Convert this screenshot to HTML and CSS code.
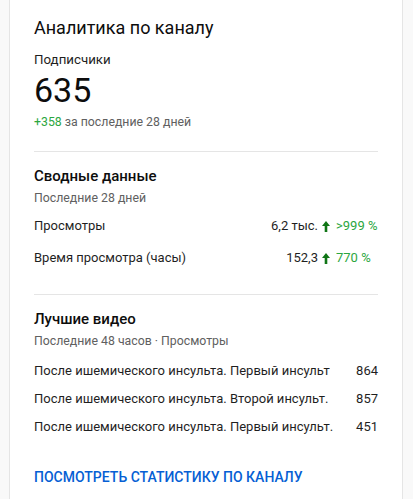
FILE: index.html
```html
<!DOCTYPE html>
<html lang="ru">
<head>
<meta charset="utf-8">
<link rel="stylesheet" href="styles.css">
</head>
<body>
<div class="card">
  <h2 class="card-title">Аналитика по каналу</h2>
  <div class="subs-label">Подписчики</div>
  <div class="subs-count">635</div>
  <div class="subs-delta"><span class="pos">+358</span> за последние 28 дней</div>

  <hr class="divider">

  <h3 class="section-title">Сводные данные</h3>
  <div class="section-sub">Последние 28 дней</div>
  <div class="metrics">
    <div class="metric-row">
      <span class="metric-name">Просмотры</span>
      <span class="metric-value">6,2 тыс.</span>
      <svg class="arrow" viewBox="0 0 8 11" width="8" height="11"><path d="M4 0L8 5H5.3V11H2.7V5H0Z" fill="#107516"/></svg>
      <span class="metric-pct">&gt;999 %</span>
    </div>
    <div class="metric-row">
      <span class="metric-name">Время просмотра (часы)</span>
      <span class="metric-value">152,3</span>
      <svg class="arrow" viewBox="0 0 8 11" width="8" height="11"><path d="M4 0L8 5H5.3V11H2.7V5H0Z" fill="#107516"/></svg>
      <span class="metric-pct">770 %</span>
    </div>
  </div>

  <hr class="divider">

  <h3 class="section-title">Лучшие видео</h3>
  <div class="section-sub">Последние 48 часов · Просмотры</div>
  <div class="videos">
    <div class="video-row"><span class="video-title">После ишемического инсульта. Первый инсульт</span><span class="video-views">864</span></div>
    <div class="video-row"><span class="video-title">После ишемического инсульта. Второй инсульт.</span><span class="video-views">857</span></div>
    <div class="video-row"><span class="video-title">После ишемического инсульта. Первый инсульт.</span><span class="video-views">451</span></div>
  </div>

  <a class="card-link" href="#">Посмотреть статистику по каналу</a>
</div>
</body>
</html>
```

FILE: styles.css
```css
html, body {
  margin: 0;
  padding: 0;
  background: #f9f9f9;
  font-family: Roboto, "Noto Sans", Arial, sans-serif;
  color: #1f1f1f;
}

.card {
  box-sizing: border-box;
  margin-left: 9px;
  width: 394px;
  min-height: 499px;
  background: #fff;
  border-left: 1px solid #e5e5e5;
  border-right: 1px solid #e5e5e5;
  padding: 14px 24px 20px;
}

.card-title {
  margin: 0;
  font-size: 18px;
  line-height: 28px;
  font-weight: 400;
  color: #0d0d0d;
}

.subs-label {
  margin-top: 8px;
  font-size: 13.3px;
  line-height: 20px;
  color: #1f1f1f;
}

.subs-count {
  font-size: 34px;
  line-height: 40px;
  font-weight: 400;
  color: #0d0d0d;
}

.subs-delta {
  margin-top: 3px;
  font-size: 12.3px;
  line-height: 18px;
  color: #606060;
}

.pos {
  color: #2ba640;
}

.divider {
  margin: 20px 0 0;
  border: 0;
  border-top: 1px solid #e5e5e5;
  height: 0;
}

.section-title {
  margin: 12px 0 0;
  font-size: 15px;
  line-height: 24px;
  font-weight: 500;
  color: #0d0d0d;
}

.section-sub {
  margin-top: 1px;
  font-size: 12.3px;
  line-height: 18px;
  color: #606060;
}

.metrics {
  margin-top: 3px;
}

.metric-row {
  display: flex;
  align-items: center;
  height: 32px;
  font-size: 13px;
  line-height: 20px;
}

.metric-name {
  flex: 1;
}

.arrow {
  margin-left: 4px;
  margin-right: 6px;
  flex: none;
}

.metric-pct {
  width: 42px;
  color: #2ba640;
  white-space: nowrap;
}

.videos {
  margin-top: 7px;
}

.video-row {
  display: flex;
  justify-content: space-between;
  align-items: center;
  height: 28px;
  font-size: 13px;
  line-height: 20px;
}

.video-title {
  white-space: nowrap;
  overflow: hidden;
}

.video-views {
  margin-left: 16px;
}

.card-link {
  display: block;
  margin-top: 26px;
  font-size: 14px;
  line-height: 20px;
  font-weight: 500;
  text-transform: uppercase;
  color: #065fd4;
  text-decoration: none;
}
```
